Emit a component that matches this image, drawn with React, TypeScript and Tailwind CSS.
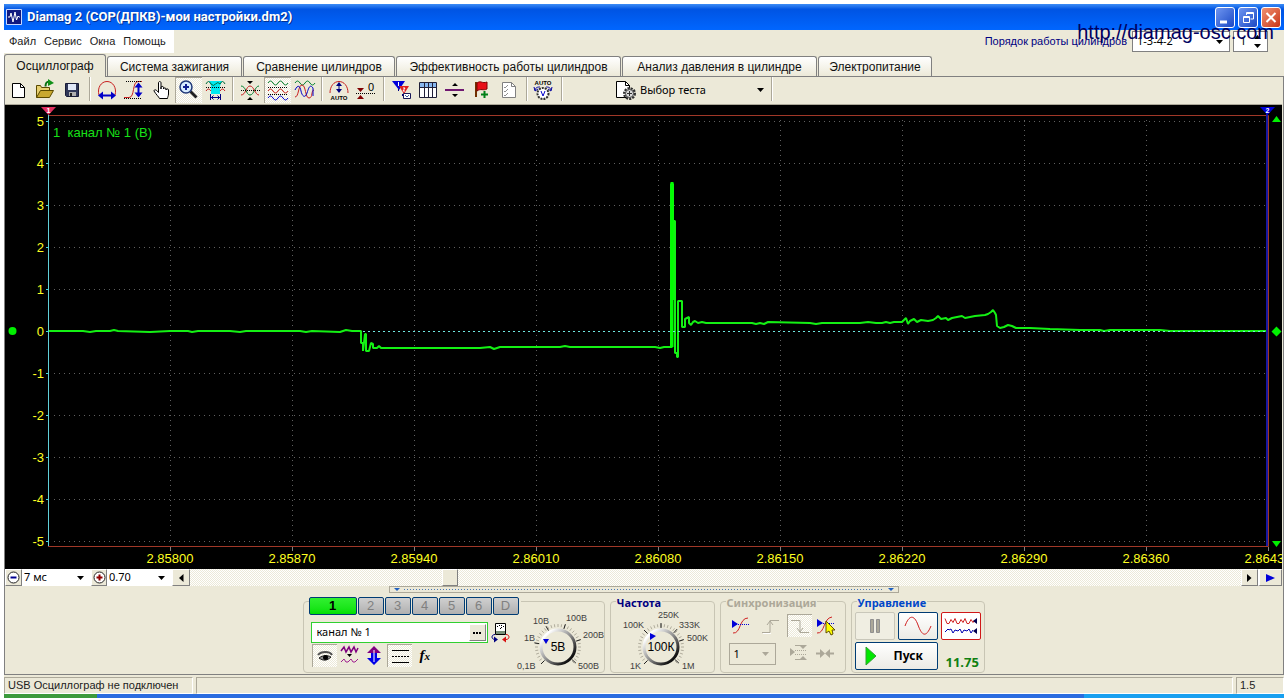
import React from 'react';
import clsx from 'clsx';

const DITHER = 'bg-[repeating-conic-gradient(#ffffff_0_25%,#ece9d8_0_50%)] bg-[length:2px_2px]';

// small sine-like line used by most of the toolbar glyphs
function wave(x: number, y: number, amp: number, half: number, count: number) {
  let d = `M${x} ${y}`;
  for (let i = 0; i < count; i++) {
    const dir = i % 2 === 0 ? -1 : 1;
    d += `q${half / 2} ${dir * amp * 2} ${half} 0`;
  }
  return d;
}

interface GlyphProps {
  w?: number;
  h?: number;
  children: React.ReactNode;
}

function Glyph({ w = 27, h = 26, children }: GlyphProps) {
  return (
    <svg width={w} height={h} viewBox={`0 0 ${w} ${h}`} fill="none" className="shrink-0" aria-hidden="true">
      {children}
    </svg>
  );
}

interface ToolProps {
  label: string;
  pressed?: boolean;
  children: React.ReactNode;
}

function Tool({ label, pressed, children }: ToolProps) {
  return (
    <button
      type="button"
      aria-label={label}
      aria-pressed={pressed}
      className={clsx('h-[26px] w-[27px] shrink-0', pressed && ['shadow-[inset_1px_1px_0_#aca899]', DITHER])}
    >
      <Glyph>{children}</Glyph>
    </button>
  );
}

function Separator() {
  return <div className="mx-[3px] h-6 w-[2px] shrink-0 border-l border-[#aca899] bg-white" />;
}

function Arrow({ color = '#000' }: { color?: string }) {
  return (
    <svg width="7" height="4" viewBox="0 0 7 4" className="pointer-events-none shrink-0" aria-hidden="true">
      <path d="M0 0h7l-3.5 4z" fill={color} />
    </svg>
  );
}

interface ComboProps {
  label: string;
  value: string;
  className: string;
  disabled?: boolean;
}

function Combo({ label, value, className, disabled }: ComboProps) {
  return (
    <div className={clsx('flex shrink-0 items-center', className)}>
      <select aria-label={label} disabled={disabled} defaultValue={value} className="min-w-0 flex-1 appearance-none bg-transparent outline-none">
        <option>{value}</option>
      </select>
      <Arrow color={disabled ? '#aca899' : '#000'} />
    </div>
  );
}

function TitleBar() {
  const base = 'flex h-[21px] w-5 items-center justify-center rounded-[3px] border border-white';
  return (
    <header className="flex h-[26px] items-center bg-linear-to-b from-[#3c8cf5] via-[#0054e3] via-20% to-[#0066ff] pr-[3px] pl-[2px]">
      <svg width="16" height="16" viewBox="0 0 16 16" aria-hidden="true">
        <path d="M.5.5h15v15H.5z" fill="#101a80" stroke="#c8d8ff" />
        <path d="M2 8h2l1-4 2 9 2-10 1.500 8 1.500-4 1 1h1" fill="none" stroke="#fff" />
      </svg>
      <h1 className="ml-[5px] font-[Roboto,sans-serif] text-[13px] font-bold text-white [text-shadow:1px_1px_0_#003090]">
        Diamag 2 (СОР(ДПКВ)-мои настройки.dm2)
      </h1>
      <div className="ml-auto flex gap-[3px]">
        <button type="button" aria-label="Свернуть" className={clsx(base, 'bg-linear-to-br from-[#6f95f0] to-[#1c47c4]')}>
          <Glyph w={18} h={19}>
            <path d="M4 14h7" stroke="#fff" strokeWidth="3" />
          </Glyph>
        </button>
        <button type="button" aria-label="Восстановить" className={clsx(base, 'bg-linear-to-br from-[#6f95f0] to-[#1c47c4]')}>
          <Glyph w={18} h={19}>
            <path d="M7.500 7V4.500h7V11h-3M7 5.500h7M4.500 8.500h6v6h-6zM4.500 9.500h6" stroke="#fff" />
          </Glyph>
        </button>
        <button type="button" aria-label="Закрыть" className={clsx(base, 'bg-linear-to-br from-[#f09070] to-[#c83010]')}>
          <Glyph w={18} h={19}>
            <path d="M4.500 5l9 9M13.500 5l-9 9" stroke="#fff" strokeWidth="2" />
          </Glyph>
        </button>
      </div>
    </header>
  );
}

function MenuRow() {
  return (
    <div className="relative flex h-6 items-start">
      <nav className="flex h-[23px] items-center gap-2 bg-white pr-2 pl-[5px] font-['Liberation_Sans',sans-serif] text-[11px] text-[#222]">
        {['Файл', 'Сервис', 'Окна', 'Помощь'].map((m) => (
          <button key={m} type="button">
            {m}
          </button>
        ))}
      </nav>
      <div className="mt-px mr-4 ml-auto flex items-center">
        <label htmlFor="order" className="mr-[5px] font-['Liberation_Sans',sans-serif] text-[11px] text-[#000080]">
          Порядок работы цилиндров
        </label>
        <div className="flex h-[21px] w-[98px] items-center border border-[#808080] bg-white pr-[6px] pl-1">
          <select id="order" defaultValue="1-3-4-2" className="min-w-0 flex-1 appearance-none text-[11px] outline-none">
            <option>1-3-4-2</option>
          </select>
          <Arrow />
        </div>
        <div className="ml-[3px] flex h-[21px] w-[35px] items-center border border-[#808080] bg-white pr-[6px] pl-[6px]">
          <input aria-label="Цилиндр" defaultValue="1" className="w-3 flex-1 text-[11px] outline-none" />
          <Glyph w={7} h={13}>
            <path d="M0 4h7L3.500 0zM0 9h7l-3.500 4z" fill="#000" />
          </Glyph>
        </div>
      </div>
      <a
        href="http://diamag-osc.com"
        className="absolute -top-[10px] right-[10px] font-['Liberation_Sans',sans-serif] text-[20px] leading-6 text-[#000060]"
      >
        http://diamag-osc.com
      </a>
    </div>
  );
}

const tabs = [
  { name: 'Осциллограф', width: 'w-[102px]' },
  { name: 'Система зажигания', width: 'w-[135px]' },
  { name: 'Сравнение цилиндров', width: 'w-[152px]' },
  { name: 'Эффективность работы цилиндров', width: 'w-[225px]' },
  { name: 'Анализ давления в цилиндре', width: 'w-[195px]' },
  { name: 'Электропитание', width: 'w-[114px]' },
];

function Tabs() {
  return (
    <div role="tablist" className="flex h-[23px] items-end gap-px border-b border-[#808080] font-['Liberation_Sans',sans-serif] text-[12px] text-[#111]">
      {tabs.map((t, i) => (
        <button
          key={t.name}
          type="button"
          role="tab"
          aria-selected={i === 0}
          className={clsx(
            'shrink-0 rounded-t-[3px] border border-b-0 border-[#808080] whitespace-nowrap',
            t.width,
            i === 0 ? '-mb-px h-[23px] bg-[#ece9d8]' : 'h-5 bg-linear-to-b from-white to-[#ece9d8]',
          )}
        >
          {t.name}
        </button>
      ))}
    </div>
  );
}

function Toolbar() {
  return (
    <div role="toolbar" className="flex h-[28px] items-start border-b border-[#aca899] shadow-[0_1px_0_#fff]">
      <Tool label="Новый">
        <path d="M7.500 6.500h8l4 4v10h-12z" fill="#fff" stroke="#000" />
        <path d="M15.500 6.500v4h4" stroke="#000" />
      </Tool>
      <Tool label="Открыть">
        <path d="M4.500 20.500v-12h4l1 2h8v3" fill="#e8d070" stroke="#5a4a00" />
        <path d="M4.500 20.500l4-7h13l-4 7z" fill="#c8a830" stroke="#5a4a00" />
        <path d="M13.500 9.500c0-4 1-5 4-5" stroke="#087010" strokeWidth="2" />
        <path d="M16 2v7l6-3z" fill="#109018" />
      </Tool>
      <Tool label="Сохранить">
        <path d="M6.500 6.500h13v13h-12l-1-1z" fill="#303858" stroke="#181c38" />
        <path d="M9 7h8v6H9z" fill="#e0e8f8" />
        <path d="M10 15h7v4h-7z" fill="#b0b0b0" />
        <path d="M11 16h2v3h-2z" fill="#202020" />
      </Tool>
      <Separator />
      <Tool label="Масштаб по времени">
        <path d="M5 18C3 11 7 4.500 13 4.500S23 11 21 18" stroke="#c82020" />
        <path d="M6 18.500h14" stroke="#0000c8" strokeWidth="2" />
        <path d="M4 18.500l5-4v8zM22 18.500l-5-4v8z" fill="#0000c8" />
      </Tool>
      <Tool label="Масштаб по амплитуде">
        <path d="M3 20.500h5c6 0 3-16 9-16h4" stroke="#c82020" />
        <path d="M5 4.500h16M3 21.500h17" stroke="#000" strokeDasharray="1 1" />
        <path d="M17.500 7v12" stroke="#0000c8" strokeWidth="2" />
        <path d="M17.500 5.500l-4 5h8zM17.500 20.500l-4-5h8z" fill="#0000c8" />
      </Tool>
      <Tool label="Перемещение">
        <path
          d="M10.500 15.500V6c0-2 2.500-2 2.500 0v6-1.500c0-1.500 2.500-1.500 2.500 0V12c0-1.500 2.500-1.500 2.500 0v1c0-1.500 2.500-1.500 2.500 0v4c0 2-1 3-1 4.500h-8c-1-2-3-3.500-5.500-7.500 0-2 2.500-1.500 4.500 1.500z"
          fill="#fff"
          stroke="#000"
        />
      </Tool>
      <Tool label="Лупа" pressed>
        <path d="M15.500 14.500l6 6" stroke="#202020" strokeWidth="3" />
        <circle cx="11" cy="10" r="6" fill="#d8ecff" stroke="#203878" strokeWidth="1.500" />
        <path d="M8 10h6M11 7v6" stroke="#102090" strokeWidth="2" />
      </Tool>
      <Tool label="Участок">
        <path d="M7 4h13l-2 5v8H9V9z" fill="#00e8f0" />
        <path d="M4 7q2.500-5 5 0M18 7q2.500-5 5 0M9 7q2.500 3 4.500 0q2.500-3 4.500 0" stroke="#006838" />
        <path d="M4 14q2.500-4 5 0M18 14q2.500-4 5 0" stroke="#c82020" />
        <path d="M4 10.500h19" stroke="#000" strokeDasharray="1 1" />
        <path d="M8.500 17v6M18.500 17v6M9 20.500h9M11.500 18.500l-2 2 2 2M15.500 18.500l2 2-2 2" stroke="#000080" />
      </Tool>
      <Separator />
      <Tool label="Совместить">
        <path d="M4 9c5 0 5 9 9 9s5-9 9-9" stroke="#008030" />
        <path d="M4 18c5 0 5-9 9-9s5 9 9 9" stroke="#c82020" />
        <path d="M4 13.500h19" stroke="#000" strokeDasharray="1 1" />
        <path d="M10 4h6l-3 3zM10 23h6l-3-3z" fill="#000" />
      </Tool>
      <Tool label="Разнести" pressed>
        <path d={wave(4, 6, 2, 5, 4)} stroke="#008030" />
        <path d={wave(4, 14, 2, 5, 4)} stroke="#c82020" />
        <path d={wave(4, 21, 2, 5, 4)} stroke="#0000c8" />
        <path d="M4 10.500h19M4 17.500h19" stroke="#000" strokeDasharray="1 1" />
      </Tool>
      <Tool label="Наложить">
        <path d={wave(4, 6, 2, 5, 4)} stroke="#008030" />
        <path d="M4 20c4 0 3-12 7-12s3 13 7 13 2-8 5-8" stroke="#c82020" />
        <path d="M4 13c3-6 5-4 6 1s4 8 6 2 3-9 6-5v8" stroke="#0000c8" />
      </Tool>
      <Separator />
      <Tool label="Авто">
        <path d="M4 16C4 9 8 4.500 13 4.500S22 9 22 16" stroke="#c82020" />
        <path d="M13 6v9" stroke="#000080" />
        <path d="M13 5l-3 4h6zM13 16l-3-4h6z" fill="#000080" />
        <text x="13" y="23" textAnchor="middle" fill="#000" className="font-['Liberation_Sans',sans-serif] text-[6px] font-bold">
          AUTO
        </text>
      </Tool>
      <Tool label="Ноль">
        <path d="M3 16.500h20" stroke="#000" strokeDasharray="1 1" />
        <path d="M4 11h7l-3.500 4zM4 22h7l-3.500-4z" fill="#800000" />
        <text x="15" y="14" fill="#000" className="font-['Liberation_Sans',sans-serif] text-[11px]">
          0
        </text>
      </Tool>
      <Separator />
      <Tool label="Маркеры">
        <path d="M4 4h13l-6 9z" fill="#0000d8" />
        <path d="M11 9h10l-5 8z" fill="#e02020" />
        <path d="M10.500 5v4M15 11h2l-2 3h2" stroke="#fff" />
        <path d="M10.500 12v2M14.500 17v2" stroke="#000080" />
        <path d="M15.500 16.500h7v5h-7z" fill="#fff" stroke="#181858" />
        <path d="M17 18l2 2 2-2" stroke="#4060a0" />
      </Tool>
      <Tool label="Таблица">
        <path d="M4.500 5.500h17v15h-17z" fill="#fff" stroke="#202038" />
        <path d="M5 6h16v4H5z" fill="#88b8f0" />
        <path d="M4.500 10.500h17M9.500 6v14M13.500 6v14M17.500 6v14" stroke="#202038" />
      </Tool>
      <Tool label="Линия">
        <path d="M3 13h19" stroke="#701870" strokeWidth="2" />
        <path d="M10 9h6l-3-3zM10 17h6l-3 3z" fill="#000" />
      </Tool>
      <Tool label="Добавить метку">
        <path d="M7 5v15" stroke="#703000" strokeWidth="2" />
        <path d="M8 6c4-3 5 1 10-1v7c-4 2-6-1-10 2z" fill="#e81018" stroke="#800000" />
        <path d="M15.500 14v7M12 17.500h7" stroke="#008018" strokeWidth="2" />
      </Tool>
      <Tool label="Отчёт">
        <path d="M6.500 5.500h9l4 4v11h-13z" fill="#fff" stroke="#808080" />
        <path d="M15.500 5.500v4h4" stroke="#808080" />
        <path d="M8 10l1 1 3-3M8 14l1 1 3-3M8 18l1 1 3-3" stroke="#909090" />
      </Tool>
      <Separator />
      <Tool label="Авто диапазон">
        <text x="12" y="8" textAnchor="middle" fill="#000" className="font-['Liberation_Sans',sans-serif] text-[6px] font-bold">
          AUTO
        </text>
        <path d="M4 13c1-3 3-3 5-3M20 13c-1-3-3-3-5-3M3 10l1 4 3-2M21 10l-1 4-3-2" stroke="#0000a0" />
        <circle cx="12" cy="16.500" r="5.500" fill="#fff" stroke="#303030" strokeWidth="2" strokeDasharray="2 1" />
        <path d="M10 14l2 5 2-5" stroke="#0000c8" />
      </Tool>
      <Separator />
      <div className="ml-12 flex h-[26px] w-[154px] items-center pr-1 pl-[2px]">
        <Glyph w={21} h={22}>
          <path d="M.5 2.500h9l4 4v12H.5z" fill="#fff" stroke="#000" />
          <path d="M9.500 2.500v4h4" stroke="#000" />
          <circle cx="13.500" cy="14.500" r="5" fill="#d0d0d0" stroke="#303030" strokeWidth="3" strokeDasharray="2 1" />
          <circle cx="13.500" cy="14.500" r="4" fill="#d8d8d8" stroke="#505050" />
          <path d="M13.500 12v5M11 14.500h5" stroke="#303030" />
        </Glyph>
        <Combo label="Выбор теста" value="Выбор теста" className="ml-[3px] flex-1 text-[11px]" />
      </div>
      <Separator />
    </div>
  );
}

const TRACE =
  'M49 331L83 331 90 332 96 331 110 331 114 330 118 331 150 332 170 331 188 331 192 332 198 331 230 331 240 332 246 331 270 331 300 331 306 332 312 331 340 332 346 330 352 331 361 331' +
  'L361 343 363 343 363 351 365 334 366 334 366 351 369 351 371 343 373 344 373 348 377 348 379 346 381 348 414 348 480 348 490 347 494 349 500 347 510 347 560 347 565 346 570 347 620 347 640 347 655 347 660 348 664 347 671 347' +
  'L671 184 673 184 673 300 674 221 675 221 675 353 677 353 677 357 678 357 678 301 682 301 682 327 685 327 685 319 689 317 689 323 691 325 693 322 695 321 698 323 702 322 706 323 752 323 756 324 760 323 764 324 768 322 810 323 816 324 822 323 860 323 868 322 876 323 882 323 886 322 890 323 894 322 902 322' +
  'L904 320 906 318 908 324 910 321 914 319 917 322 921 320 928 321 933 320 936 318 938 316 941 319 946 318 948 320 952 318 962 316 965 318 970 317 975 316 985 315 988 314 991 312 993 310 995 313 996 315 997 326 1000 328 1004 327 1008 325 1012 326 1016 328 1022 328 1030 328 1050 329 1080 330 1100 330 1104 331 1110 330 1160 330 1170 331 1266 331';

const xLabels = ['2.85800', '2.85870', '2.85940', '2.86010', '2.86080', '2.86150', '2.86220', '2.86290', '2.86360', '2.8643'];

function Scope() {
  return (
    <svg viewBox="5 105 1277 464" className="block h-auto w-full bg-black font-['Liberation_Sans',sans-serif] text-[13px]" role="img" aria-label="Осциллограмма">
      {xLabels.map((label, i) => {
        const x = 170.5 + i * 122;
        return (
          <g key={label}>
            {i < 9 && <path d={`M${x} 120V545`} stroke="#606060" strokeDasharray="1 4" />}
            <path d={`M${x} 547v4`} stroke="#808080" />
            <text x={x - 24} y="563" fill="#ffff20">
              {label}
            </text>
          </g>
        );
      })}
      {[5, 4, 3, 2, 1, 0, -1, -2, -3, -4, -5].map((v, i) => {
        const y = 121.5 + i * 42;
        return (
          <g key={v}>
            {v !== 0 && <path d={`M54 ${y}H1266`} stroke="#606060" strokeDasharray="1 4" />}
            <path d={`M46 ${y}h3`} stroke="#40d8e0" />
            <text x="44" y={y + 4} textAnchor="end" fill="#ffff20">
              {v}
            </text>
          </g>
        );
      })}
      <path d="M48 115.500H1268.500V546.500H48" fill="none" stroke="#a03828" />
      <path d="M1267 112V546" stroke="#1818a0" strokeWidth="2" />
      <path d="M48.500 115V546" stroke="#60d0d8" />
      <path d={TRACE} fill="none" stroke="#14f014" strokeWidth="2" strokeLinejoin="bevel" />
      <path d="M671.500 348V183h1v164" fill="none" stroke="#00ff00" strokeWidth="2" />
      <path d="M363 331.500H1266" stroke="#70e8e0" strokeDasharray="2 3" />
      <text x="53" y="137" fill="#18e018" className="whitespace-pre">
        {'1  канал № 1 (В)'}
      </text>
      <path d="M41 107h15l-7.500 8z" fill="#e03060" />
      <path d="M1260 107h15l-7.500 8z" fill="#0000d8" />
      <text x="48.500" y="113" textAnchor="middle" fill="#fff" className="text-[7px] font-bold">
        1
      </text>
      <text x="1267.500" y="113" textAnchor="middle" fill="#fff" className="text-[7px] font-bold">
        2
      </text>
      <circle cx="12.500" cy="331" r="4" fill="#00f000" />
      <path d="M1272 122h9l-4.500-6zM1272 541h9l-4.500 6zM1276.500 326.500l5 5-5 5-5-5z" fill="#00f000" />
    </svg>
  );
}

const raised = 'flex shrink-0 items-center justify-center border border-t-white border-l-white border-r-[#808080] border-b-[#808080] bg-[#ece9d8]';

function ScrollRow() {
  return (
    <div className={clsx('flex h-[17px] text-[11px]', DITHER)}>
      <button type="button" aria-label="Уменьшить" className={clsx(raised, 'w-[17px]')}>
        <Glyph w={13} h={13}>
          <circle cx="6.500" cy="6.500" r="5.500" fill="#fff" stroke="#202020" />
          <path d="M3.500 6.500h6" stroke="#000090" strokeWidth="2" />
        </Glyph>
      </button>
      <Combo label="Развёртка" value="7 мс" className="w-[69px] bg-white pr-[7px] pl-[2px]" />
      <button type="button" aria-label="Увеличить" className={clsx(raised, 'w-4')}>
        <Glyph w={13} h={13}>
          <circle cx="6.500" cy="6.500" r="5.500" fill="#fff" stroke="#202020" />
          <path d="M3.500 6.500h6M6.500 3.500v6" stroke="#900000" strokeWidth="2" />
        </Glyph>
      </button>
      <Combo label="Множитель" value="0.70" className="w-[65px] bg-white pr-[7px] pl-[2px]" />
      <button type="button" aria-label="Влево" className={clsx(raised, 'w-[18px]')}>
        <Glyph w={5} h={8}>
          <path d="M4.500 0v8L0 4z" fill="#000" />
        </Glyph>
      </button>
      <div className="flex-1">
        <div className={clsx(raised, 'ml-[24%] h-[17px] w-4')} />
      </div>
      <button type="button" aria-label="Вправо" className={clsx(raised, 'w-[17px]')}>
        <Glyph w={5} h={8}>
          <path d="M0 0v8l4.500-4z" fill="#000" />
        </Glyph>
      </button>
      <button type="button" aria-label="В конец" className={clsx(raised, 'w-6 border-l-2 border-l-[#2050a0]')}>
        <Glyph w={9} h={8}>
          <path d="M0 0v8l9-4z" fill="#0000d8" />
        </Glyph>
      </button>
    </div>
  );
}

interface KnobProps {
  width: number;
  cx: number;
  value: string;
  marks: { text: string; x: number; y: number; angle: number }[];
  pointer: string;
}

function Knob({ width, cx, value, marks, pointer }: KnobProps) {
  const cy = 40;
  const ticks = Array.from({ length: 31 }, (_, i) => -225 + i * 9);
  const id = `knob-${value}`;
  const line = (deg: number, r1: number, r2: number) => {
    const a = (deg * Math.PI) / 180;
    return `M${cx + r1 * Math.cos(a)} ${cy + r1 * Math.sin(a)}L${cx + r2 * Math.cos(a)} ${cy + r2 * Math.sin(a)}`;
  };
  return (
    <svg width={width} height="64" viewBox={`0 0 ${width} 64`} className="shrink-0 font-['Liberation_Sans',sans-serif]" role="img" aria-label={value}>
      <defs>
        <linearGradient id={id} x1="0" y1="0" x2="1" y2="1">
          <stop offset="0.15" stopColor="#ffffff" />
          <stop offset="0.5" stopColor="#909090" />
          <stop offset="0.85" stopColor="#101010" />
        </linearGradient>
      </defs>
      {ticks.map((t) => (
        <path key={t} d={line(t, 20, 23)} stroke="#b0ac9c" />
      ))}
      {marks.map((m) => (
        <g key={m.text}>
          <path d={line(m.angle, 19, 24)} stroke="#202020" />
          <text x={m.x} y={m.y} fill="#404040" className="text-[9px]">
            {m.text}
          </text>
        </g>
      ))}
      <circle cx={cx} cy={cy} r="17" fill="#ece9d8" stroke={`url(#${id})`} strokeWidth="3" />
      <path d={pointer} fill="#0000d8" />
      <text x={cx} y="44" textAnchor="middle" fill="#000" className="text-[12px]">
        {value}
      </text>
    </svg>
  );
}

interface GroupProps {
  title: string;
  tone: string;
  width: string;
  children: React.ReactNode;
}

function Group({ title, tone, width, children }: GroupProps) {
  return (
    <section aria-label={title} className={clsx('h-[72px] shrink-0 rounded-[4px] border border-[#c8c5b4]', width)}>
      <h2 className={clsx('-mt-1 ml-[5px] w-fit bg-[#ece9d8] px-px text-[11px] leading-[10px] font-bold', tone)}>{title}</h2>
      {children}
    </section>
  );
}

function Small({ label, pressed, children }: ToolProps) {
  return (
    <button
      type="button"
      aria-label={label}
      aria-pressed={pressed}
      className={clsx('h-[23px] w-[25px] shrink-0', pressed && ['shadow-[inset_1px_1px_0_#aca899]', DITHER])}
    >
      <Glyph w={25} h={23}>{children}</Glyph>
    </button>
  );
}

function ChannelGroup() {
  return (
    <section aria-label="Канал" className="flex h-[72px] w-[302px] shrink-0 rounded-[4px] border border-[#c8c5b4]">
      <div className="-mt-[5px] ml-[5px] w-[206px]">
        <div className="flex w-[212px] gap-px bg-[#ece9d8] font-['Liberation_Sans',sans-serif] text-[13px]">
          <button type="button" className="h-[18px] w-12 rounded-[2px] border border-[#003c74] bg-linear-to-b from-[#30f030] to-[#00e000] leading-4 font-bold">
            1
          </button>
          {['2', '3', '4', '5', '6', 'D'].map((c) => (
            <button
              key={c}
              type="button"
              className="h-[18px] w-[26px] rounded-[2px] border border-[#003c74] bg-linear-to-b from-[#d0d0d0] to-[#b0b0b0] leading-4 text-[#808080]"
            >
              {c}
            </button>
          ))}
        </div>
        <div className="mt-[7px] ml-[2px] flex items-center gap-[3px]">
          <div className="flex h-[21px] w-[177px] items-center border border-[#30d030] bg-white p-px">
            <input aria-label="Имя канала" defaultValue="канал № 1" className="min-w-0 flex-1 pl-1 text-[11px] outline-none" />
            <button type="button" aria-label="Выбрать имя" className={clsx(raised, 'h-[17px] w-[17px]')}>
              <Glyph w={8} h={2}>
                <path d="M0 0h2v2H0zM3 0h2v2H3zM6 0h2v2H6z" fill="#000" />
              </Glyph>
            </button>
          </div>
          <button type="button" aria-label="Поменять датчик">
            <Glyph w={20} h={20}>
              <path d="M4.500.5h10v11h-10z" fill="#fff" stroke="#000" />
              <path d="M5 8h9v3H5z" fill="#789078" />
              <path d="M6 3.500h1M8 2.500h1M10 2.500h1M12 3.500h1M9 6l2-2" stroke="#000" />
              <path d="M4 11.500c-4 0-4 5 0 5" stroke="#000080" />
              <path d="M3 13.500v6l4-3z" fill="#000080" />
              <path d="M15 11.500c4 0 4 5 0 5" stroke="#d81010" />
              <path d="M15 13.500v6l-4-3z" fill="#d81010" />
            </Glyph>
          </button>
        </div>
        <div className="mt-px ml-[3px] flex">
          <Small label="Показать" pressed>
            <path d="M6 11c3-4 12-4 14 0" stroke="#505050" strokeWidth="2" />
            <path d="M7 14c4-3 8-3 12-1-4 4-8 4-12 1z" fill="#909090" stroke="#202020" />
            <circle cx="13.500" cy="13.500" r="2.500" fill="#000" />
          </Small>
          <Small label="Фильтр">
            <path d="M4 7l3-4 2 5 3-5 2 5 3-5 2 5 2-4" stroke="#800080" strokeWidth="1.500" />
            <path d="M10 10h5l-2.500 3z" fill="#000" />
            <path d="M4 18l3-3 2 3h2l3-3 2 3h2l3-3" stroke="#a02090" />
          </Small>
          <Small label="Инверсия">
            <path d="M12 2l7 7h-4v4H9V9H5z" fill="#800080" />
            <path d="M12 21l7-7h-4v-5H9v5H5z" fill="#0000e8" />
            <path d="M12 6v12" stroke="#fff" />
          </Small>
          <Small label="Линии" pressed>
            <path d="M5 6.500h17M5 18.500h17" stroke="#000" />
            <path d="M5 12.500h17" stroke="#000" strokeDasharray="2 1" />
          </Small>
          <button type="button" className="ml-2 font-['Liberation_Serif',serif] text-[15px] leading-[23px] font-bold italic">
            f<span className="text-[11px]">x</span>
          </button>
        </div>
      </div>
      <div className="mt-[5px] ml-px">
        <Knob
          width={88}
          cx={42}
          value="5В"
          pointer="M27 32h6l-3 5z"
          marks={[
            { text: '0,1В', x: 1, y: 62, angle: -225 },
            { text: '1В', x: 8, y: 34, angle: -170 },
            { text: '10В', x: 17, y: 17, angle: -120 },
            { text: '100В', x: 50, y: 14, angle: -72 },
            { text: '200В', x: 67, y: 31, angle: -18 },
            { text: '500В', x: 62, y: 62, angle: 42 },
          ]}
        />
      </div>
    </section>
  );
}

function ControlPanel() {
  return (
    <div className="flex h-[88px] flex-col items-center overflow-hidden">
      <div className="flex h-[7px] w-[510px] items-center justify-between border border-[#aca899] px-1">
        <Glyph w={6} h={3}>
          <path d="M0 0h6L3 3z" fill="#2060c0" />
        </Glyph>
        <div className="mx-1 h-px flex-1 bg-[repeating-linear-gradient(90deg,#4878b8_0_1px,transparent_1px_3px)]" />
        <Glyph w={6} h={3}>
          <path d="M0 0h6L3 3z" fill="#2060c0" />
        </Glyph>
      </div>
      <div className="mt-2 flex gap-[5px]">
        <ChannelGroup />
        <Group title="Частота" tone="text-[#000080]" width="w-[105px]">
          <div className="-mt-px ml-[2px]">
            <Knob
              width={101}
              cx={48}
              value="100К"
              pointer="M37 26v7l6-4z"
              marks={[
                { text: '1K', x: 17, y: 62, angle: -225 },
                { text: '100K', x: 10, y: 21, angle: -135 },
                { text: '250K', x: 45, y: 11, angle: -90 },
                { text: '333K', x: 66, y: 21, angle: -48 },
                { text: '500K', x: 74, y: 34, angle: -18 },
                { text: '1M', x: 69, y: 62, angle: 42 },
              ]}
            />
          </div>
        </Group>
        <Group title="Синхронизация" tone="text-[#aca899]" width="w-[126px]">
          <div className="mt-[6px] ml-2 flex gap-1">
            <Small label="Уровень">
              <path d="M4 19c8 1 6-15 15-15" stroke="#d02020" />
              <path d="M3 10.500h18" stroke="#0000d8" strokeDasharray="1 1" />
              <path d="M3 6v8l6-4z" fill="#0000d8" />
            </Small>
            <Small label="Фронт">
              <path d="M4 18.500h8v-12h9M9 11l3-4 3 4" stroke="#aca899" />
              <path d="M5 19.500h8" stroke="#fff" />
            </Small>
            <Small label="Спад" pressed>
              <path d="M4 6.500h9v12h9M10 14l3 4 3-4" stroke="#aca899" />
            </Small>
            <Small label="Выбрать уровень">
              <path d="M1 19c8 1 6-15 15-16" stroke="#d02020" />
              <path d="M1 9.500h18" stroke="#0000d8" strokeDasharray="1 1" />
              <path d="M1 5v8l6-4z" fill="#0000d8" />
              <path d="M10 7v12l3-2 2 4 2-1-1-4h3z" fill="#ffff00" stroke="#605000" />
            </Small>
          </div>
          <div className="mt-[6px] ml-2 flex">
            <Combo label="Канал" value="1" disabled className="h-[22px] w-[47px] border border-[#aca899] pr-[6px] pl-1 text-[11px]" />
            <div className="ml-[10px] flex gap-[2px]">
              <Small label="Границы">
                <path d="M4 5v8l5-4zM13 2h8l-4 4zM13 17h8l-4-4z" fill="#aca899" />
                <path d="M9 7.500h11M9 11.500h11" stroke="#aca899" strokeDasharray="1 1" />
                <path d="M9 2.500h6M9 16.500h6" stroke="#aca899" />
              </Small>
              <Small label="Сжать">
                <path d="M3 10.500h6M21 10.500h-6" stroke="#aca899" strokeWidth="2" />
                <path d="M7 6v9l5-4.500zM17 6v9l-5-4.500z" fill="#aca899" />
              </Small>
            </div>
          </div>
        </Group>
        <Group title="Управление" tone="text-[#0046c8]" width="w-[134px]">
          <div className="mt-1 ml-[3px] flex gap-[3px]">
            <button type="button" aria-label="Пауза" className="flex h-7 w-10 items-center justify-center rounded-[2px] border border-[#c9c7ba] bg-[#f0eee2]">
              <Glyph w={12} h={16}>
                <path d="M1.500 1.500h3v13h-3zM7.500 1.500h3v13h-3z" fill="#aca899" stroke="#909090" />
              </Glyph>
            </button>
            <button type="button" aria-label="Синус" className="flex h-7 w-10 items-center justify-center rounded-[2px] border border-[#003c74] bg-linear-to-b from-white to-[#ecebe5]">
              <Glyph w={28} h={20}>
                <path d="M1 10C5-1 10-2 14 9s8 13 13 1" stroke="#d02020" />
              </Glyph>
            </button>
            <button type="button" aria-label="Потоки" className="flex h-7 w-10 items-center justify-center rounded-[2px] border border-[#d01818] bg-white">
              <Glyph w={34} h={20}>
                <path d="M1 2.500l2 5h2l2-4 2 3 2-4 2 5h2l2-4 2 3 2-4 2 5h2l2-4 2 3 1-2" stroke="#d02020" />
                <path d="M1 16l3-3 1 1 2-1 2 4 2-3 3 1 2-2 2 4 2-3 3 1 2-2 2 4 2-3" stroke="#0000b0" />
                <path d="M33 2v6l-4-3zM33 12v6l-4-3z" fill="#000050" />
              </Glyph>
            </button>
          </div>
          <div className="mt-[2px] ml-[3px] flex items-end">
            <button
              type="button"
              className="flex h-7 w-[83px] items-center gap-[17px] rounded-[2px] border border-[#003c74] bg-linear-to-b from-white to-[#ecebe5] pl-[9px] text-[12px] font-bold"
            >
              <Glyph w={12} h={20}>
                <path d="M1 1v18l10-9z" fill="#00e800" stroke="#30a030" />
              </Glyph>
              Пуск
            </button>
            <output className="ml-2 text-[13px] leading-4 font-bold text-[#108010]">11.75</output>
          </div>
        </Group>
      </div>
    </div>
  );
}

function StatusBar() {
  const cell = 'h-[17px] border border-t-[#aca899] border-l-[#aca899] border-r-white border-b-white pl-[3px] leading-[15px] whitespace-nowrap';
  return (
    <footer className="mt-[2px] flex gap-[3px] font-['Liberation_Sans',sans-serif] text-[11px] text-[#222]">
      <div className={clsx(cell, 'w-[189px]')}>USB Осциллограф не подключен</div>
      <div className={clsx(cell, 'flex-1')} />
      <div className={clsx(cell, 'w-12')}>1.5</div>
    </footer>
  );
}

export default function App() {
  return (
    <div className="min-h-screen overflow-hidden bg-white px-1 pt-1 font-['Noto_Sans','Open_Sans',sans-serif] text-black">
      <div className="bg-[#ece9d8]">
        <TitleBar />
        <MenuRow />
        <Tabs />
        <main className="border-x border-b border-[#808080] pr-px">
          <Toolbar />
          <Scope />
          <ScrollRow />
          <ControlPanel />
        </main>
        <StatusBar />
        <div className="flex h-1">
          <div className="w-[93px] bg-[#3c9a3c]" />
          <div className="flex-1 bg-[#2a6ce0]" />
          <div className="w-[200px] bg-[#18a0f0]" />
        </div>
      </div>
    </div>
  );
}
